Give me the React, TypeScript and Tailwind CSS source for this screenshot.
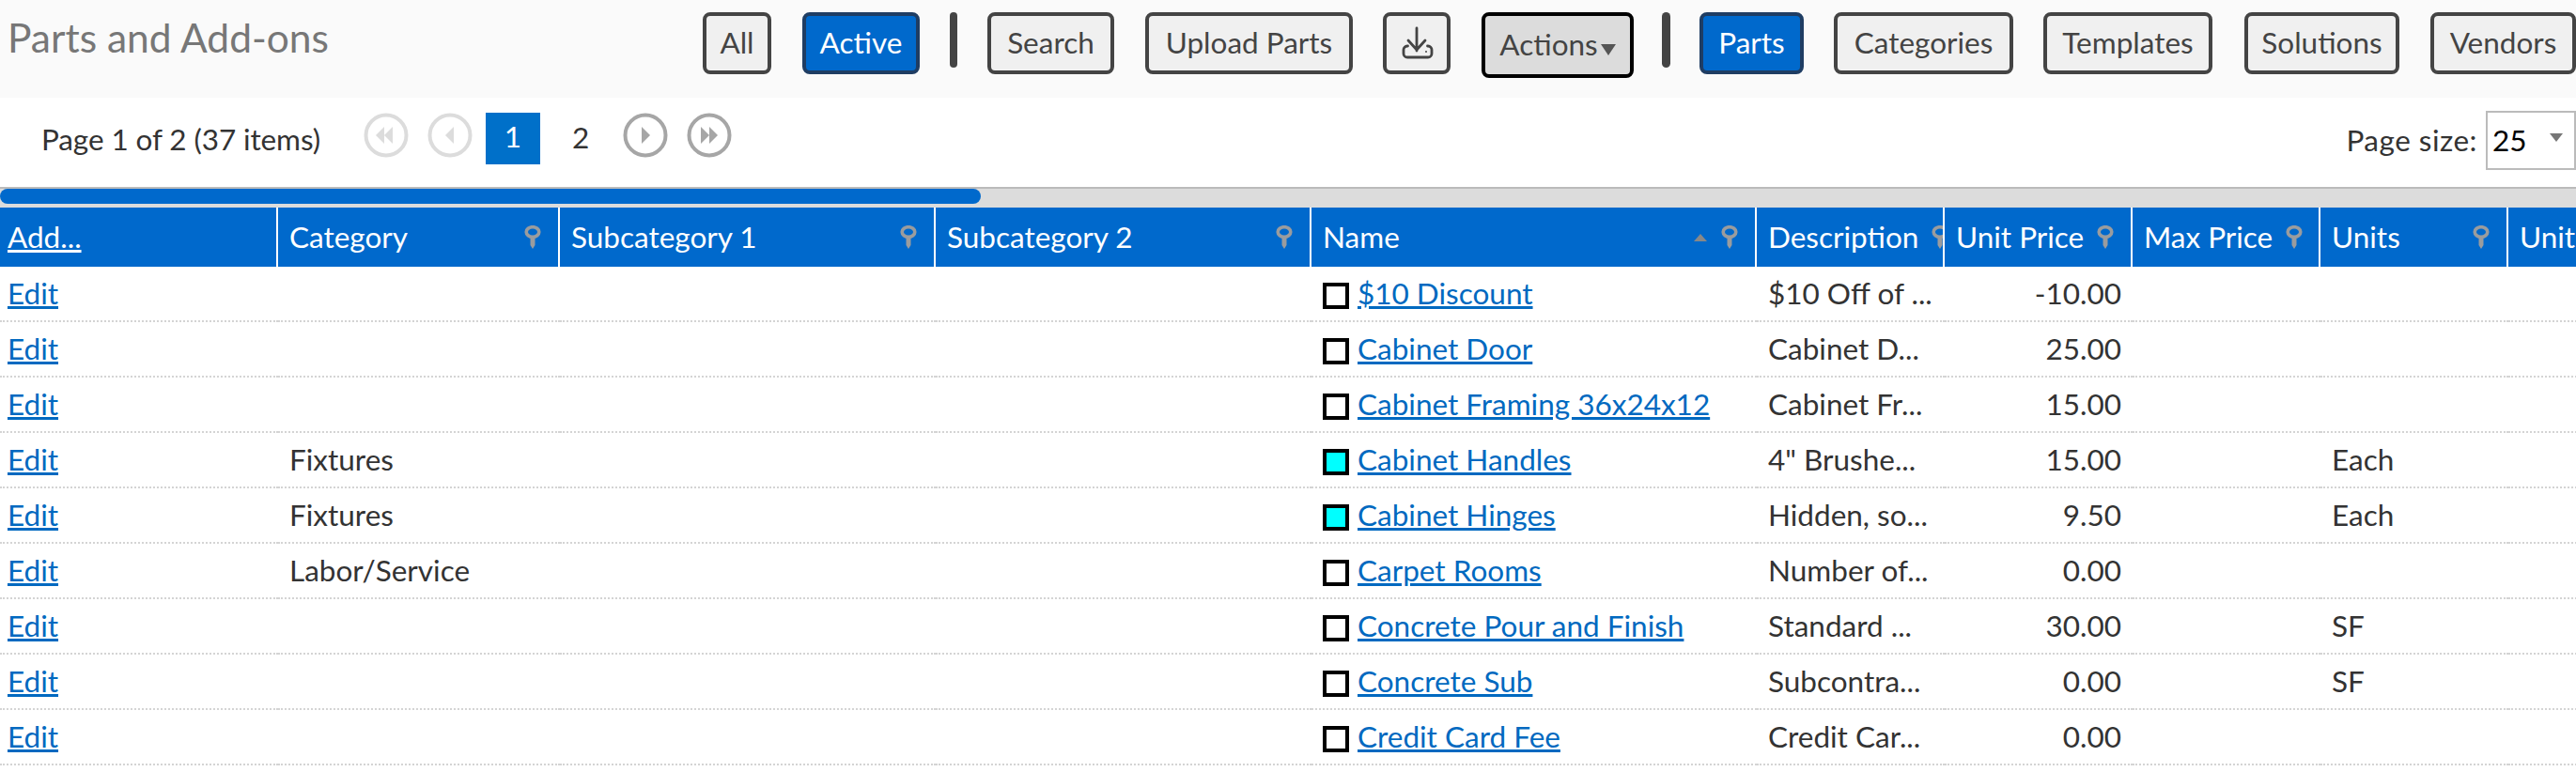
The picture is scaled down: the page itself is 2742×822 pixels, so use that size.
const font = { fontFamily: "Lato, 'Open Sans', sans-serif" };

function HeaderButton({ label, width, active }: { label: string; width: string; active?: boolean }) {
  return (
    <button
      className={`h-[66px] shrink-0 rounded-[8px] border-4 text-[31.5px] leading-none ${width} ${
        active ? "border-[#1f3d63] bg-[#0069cc] text-white" : "border-[#444444] bg-[#f0f0f0] text-[#444444]"
      }`}
    >
      {label}
    </button>
  );
}

function Separator({ width = "w-2" }: { width?: string }) {
  return <div className={`h-[59px] shrink-0 rounded-full bg-[#444444] ${width}`} />;
}

function DownloadIcon() {
  return (
    <svg width="36" height="36" viewBox="0 0 36 36" fill="none" stroke="#444444" strokeWidth="2.8" strokeLinecap="round" strokeLinejoin="round">
      <path d="M18 2v24M9 15l9 10 9-10" />
      <path d="M8.500 21H8a4 4 0 0 0-4 4v4a4 4 0 0 0 4 4h22a4 4 0 0 0 4-4v-4a4 4 0 0 0-4-4h-.5" />
      <circle cx="28" cy="27" r="1" fill="#444444" stroke="none" />
    </svg>
  );
}

function PagerIcon({ dir, count, light }: { dir: "l" | "r"; count: 1 | 2; light?: boolean }) {
  const c = light ? "#dcdcdc" : "#a6a6a6";
  const tri = (x: number) =>
    dir === "l" ? `M${x + 9} 15v18l-9-9z` : `M${x} 15v18l9-9z`;
  const xs = count === 1 ? [dir === "l" ? 19 : 20] : [dir === "l" ? 13 : 15, dir === "l" ? 22 : 24];
  return (
    <svg width="48" height="48" viewBox="0 0 48 48" className="shrink-0">
      <circle cx="24" cy="24" r="21.500" fill="none" stroke={c} strokeWidth="4" />
      {xs.map((x) => (
        <path key={x} d={tri(x)} fill={c} />
      ))}
    </svg>
  );
}

function FilterIcon() {
  return (
    <svg width="18" height="25" viewBox="0 0 18 25" className="shrink-0">
      <ellipse cx="9" cy="7" rx="6.800" ry="5.300" fill="none" stroke="#9a9c9e" strokeWidth="3.600" />
      <path d="M6.500 12h5v9l-2.500 4-2.500-4z" fill="#9a9c9e" />
    </svg>
  );
}

const columns = [
  { w: "w-[296px]", label: "Add...", link: true },
  { w: "w-[300px]", label: "Category", filter: true },
  { w: "w-[400px]", label: "Subcategory 1", filter: true },
  { w: "w-[400px]", label: "Subcategory 2", filter: true },
  { w: "w-[474px]", label: "Name", filter: true, sort: true },
  { w: "w-[200px]", label: "Description", filter: true },
  { w: "w-[200px]", label: "Unit Price", filter: true },
  { w: "w-[200px]", label: "Max Price", filter: true },
  { w: "w-[200px]", label: "Units", filter: true },
  { w: "w-[200px]", label: "Unit", filter: false },
];

const rows = [
  { cat: "", name: "$10 Discount", desc: "$10 Off of ...", price: "-10.00", units: "", on: false },
  { cat: "", name: "Cabinet Door", desc: "Cabinet D...", price: "25.00", units: "", on: false },
  { cat: "", name: "Cabinet Framing 36x24x12", desc: "Cabinet Fr...", price: "15.00", units: "", on: false },
  { cat: "Fixtures", name: "Cabinet Handles", desc: "4\" Brushe...", price: "15.00", units: "Each", on: true },
  { cat: "Fixtures", name: "Cabinet Hinges", desc: "Hidden, so...", price: "9.50", units: "Each", on: true },
  { cat: "Labor/Service", name: "Carpet Rooms", desc: "Number of...", price: "0.00", units: "", on: false },
  { cat: "", name: "Concrete Pour and Finish", desc: "Standard ...", price: "30.00", units: "SF", on: false },
  { cat: "", name: "Concrete Sub", desc: "Subcontra...", price: "0.00", units: "SF", on: false },
  { cat: "", name: "Credit Card Fee", desc: "Credit Car...", price: "0.00", units: "", on: false },
];

const cell = "h-[59px] overflow-hidden whitespace-nowrap border-b-2 border-dotted border-[#d4d4d4] px-3 align-middle";

export default function App() {
  return (
    <div className="h-[822px] w-[2742px] overflow-hidden bg-white text-[31.5px] text-[#333333]" style={font}>
      <header className="flex h-[104px] items-start justify-between bg-[#fafafa] pt-[13px]">
        <h1 className="pl-2 pt-1 text-[42.5px] font-normal leading-[46px] text-[#777777]">Parts and Add-ons</h1>
        <div className="flex items-start gap-8">
          <HeaderButton label="All" width="w-[73px]" />
          <span className="ml-px"><HeaderButton label="Active" width="w-[125px]" active /></span>
          <Separator />
          <HeaderButton label="Search" width="w-[135px]" />
          <span className="ml-px"><HeaderButton label="Upload Parts" width="w-[221px]" /></span>
          <button className="flex h-[66px] w-[72px] shrink-0 items-center justify-center rounded-[8px] border-4 border-[#444444] bg-[#f0f0f0]">
            <DownloadIcon />
          </button>
          <button className="ml-px flex h-[70px] w-[162px] shrink-0 items-center justify-center gap-[3px] rounded-[8px] border-4 border-black bg-[#dcdcdc] text-[31.5px] leading-none text-[#444444]">
            Actions
            <span className="mt-[10px] h-0 w-0 border-x-[8px] border-t-[12px] border-x-transparent border-t-[#555555]" />
          </button>
          <span className="-ml-[2px]"><Separator width="w-[9px]" /></span>
          <span className="-ml-px"><HeaderButton label="Parts" width="w-[111px]" active /></span>
          <HeaderButton label="Categories" width="w-[191px]" />
          <HeaderButton label="Templates" width="w-[180px]" />
          <span className="ml-[2px]"><HeaderButton label="Solutions" width="w-[165px]" /></span>
          <span className="ml-px"><HeaderButton label="Vendors" width="w-[155px]" /></span>
        </div>
      </header>

      <section className="flex h-[95px] items-start">
        <span className="ml-[44px] mt-[26px] w-[343px] leading-[36px] tracking-[-0.1px]">Page 1 of 2 (37 items)</span>
        <div className="mt-4 flex items-start">
          <PagerIcon dir="l" count={2} light />
          <span className="ml-5"><PagerIcon dir="l" count={1} light /></span>
          <span className="ml-[14px] flex h-[55px] w-[58px] items-center justify-center bg-[#0070c9] pb-1 text-white">1</span>
          <span className="ml-[34px] mt-[8px] w-[54px] leading-[36px]">2</span>
          <PagerIcon dir="r" count={1} />
          <span className="ml-5"><PagerIcon dir="r" count={2} /></span>
        </div>
        <div className="ml-auto mt-[14px] flex items-center">
          <span className="mr-[9px] tracking-[0.5px]">Page size:</span>
          <div className="relative flex h-[63px] w-[96px] items-center border-2 border-[#bbbbbb] pl-[5px] text-black">
            25
            <span className="absolute right-[12px] top-[22px] h-0 w-0 border-x-[7px] border-t-[9px] border-x-transparent border-t-[#777777]" />
          </div>
        </div>
      </section>

      <div className="h-[22px] border-t-2 border-[#bbbbbb] bg-[#dcdcdc]">
        <div className="h-4 w-[1044px] rounded-[8px] bg-[#0069cc]" />
      </div>

      <table className="w-[2870px] table-fixed border-separate border-spacing-0">
        <colgroup>
          {columns.map((c) => (
            <col key={c.label} className={c.w} />
          ))}
        </colgroup>
        <thead>
          <tr className="h-[63px] bg-[#0069cc] text-white">
            {columns.map((c, i) => (
              <th key={c.label} className={`p-0 text-left font-normal ${i < columns.length - 1 ? "border-r-2 border-white" : ""}`}>
                <div className={`flex h-[63px] items-center gap-[14px] overflow-hidden whitespace-nowrap ${c.link ? "pl-2" : "pl-3"} pr-[18px]`}>
                  <span className={`shrink-0 ${c.link ? "underline" : ""}`}>{c.label}</span>
                  {c.filter && (
                    <span className="ml-auto flex shrink-0 items-center gap-[15px]">
                      {c.sort && <span className="h-0 w-0 border-x-[7px] border-b-[8px] border-x-transparent border-b-[#888888]" />}
                      <FilterIcon />
                    </span>
                  )}
                </div>
              </th>
            ))}
          </tr>
        </thead>
        <tbody>
          {rows.map((r) => (
            <tr key={r.name}>
              <td className={`${cell} pl-2`}><a href="#" className="text-[#0069c0] underline">Edit</a></td>
              <td className={cell}>{r.cat}</td>
              <td className={cell} />
              <td className={cell} />
              <td className={cell}>
                <span className="flex items-center gap-[9px]">
                  <span className={`mt-[5px] h-7 w-7 shrink-0 border-4 border-black ${r.on ? "bg-[#00ffff]" : "bg-white"}`} />
                  <a href="#" className="text-[#0069c0] underline">{r.name}</a>
                </span>
              </td>
              <td className={cell}>{r.desc}</td>
              <td className={`${cell} text-right`}>{r.price}</td>
              <td className={cell} />
              <td className={cell}>{r.units}</td>
              <td className={cell} />
            </tr>
          ))}
        </tbody>
      </table>
    </div>
  );
}
